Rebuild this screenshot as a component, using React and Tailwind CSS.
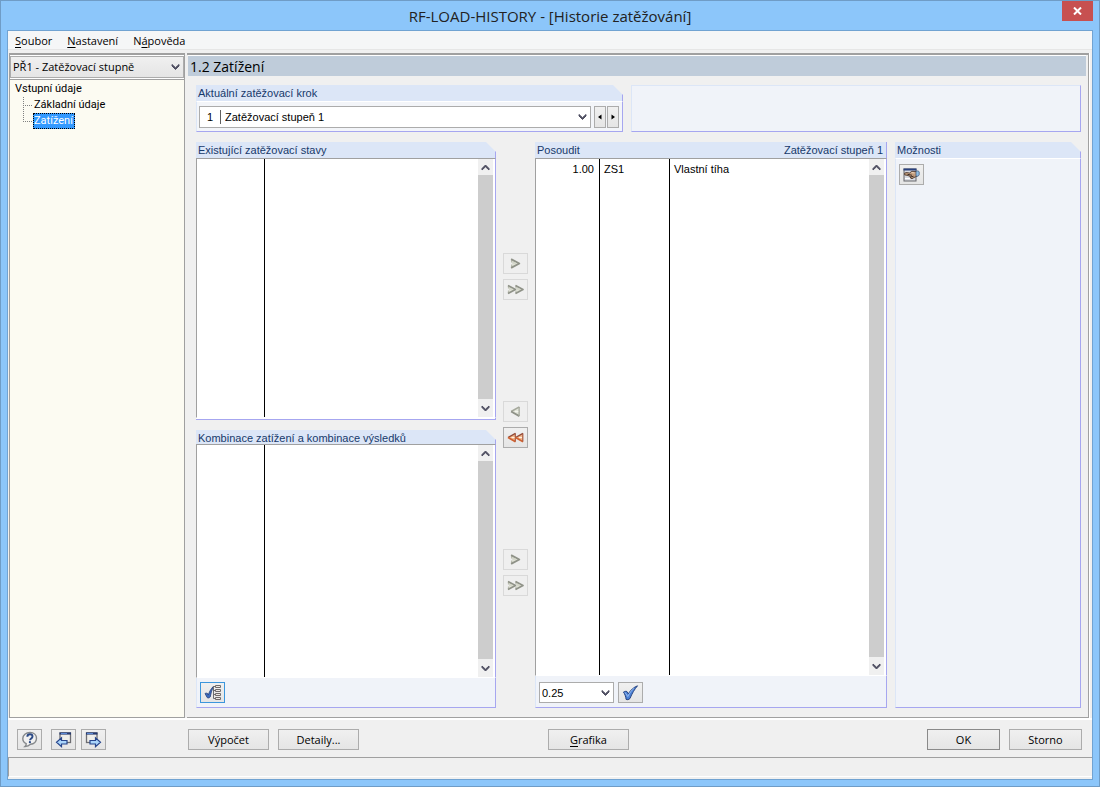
import { useState } from 'react';
import clsx from 'clsx';

const CHEVRON = 'pointer-events-none absolute top-1/2 -translate-y-1/2';

function ChevronDown({ className }) {
    return (
        <svg width="9" height="7" viewBox="0 0 9 7" className={className} aria-hidden="true">
            <path d="M1 1v1.5l3.5 3.5L8 2.5V1L4.5 4.2z" fill="#4d4d60" stroke="#4d4d60" strokeWidth="1" />
        </svg>
    );
}

function ChevronUp() {
    return (
        <svg width="9" height="7" viewBox="0 0 9 7" aria-hidden="true">
            <path d="M1 6V4.5L4.5 1 8 4.5V6L4.5 2.8z" fill="#4d4d60" stroke="#4d4d60" strokeWidth="1" />
        </svg>
    );
}

function ArrowHead({ x, left, active }) {
    if (!left) {
        return (
            <g transform={`translate(${x} 0)`}>
                <path d="M1 1L9 5L1 9L2.5 5z" fill="#e0e2d6" />
                <path d="M1.500 1V4M1.500 6V9" stroke="#b9bcae" strokeWidth="1.200" />
                <path d="M1 1L8.500 5L1 9" stroke="#8f9288" strokeWidth="1.600" strokeLinejoin="round" />
                <path d="M2 4.500h3.500" stroke="#c9ccbe" />
            </g>
        );
    }
    return (
        <g transform={`translate(${x} 0)`}>
            <path d="M8.500 .8L1 5l7.500 4.200z" fill={active ? '#f3b98c' : '#e2e5da'} />
            <path d="M8.500 .8L1 5" stroke={active ? '#8f4a38' : '#a5a89c'} strokeWidth="1.400" />
            <path d="M1 5l7.500 4.200" stroke={active ? '#d0602f' : '#8f9288'} strokeWidth="1.600" />
            <path d="M8.300 1v8" stroke={active ? '#a85a44' : '#a5a89c'} strokeWidth="1.200" />
            <path d="M4.500 5h3" stroke={active ? '#fff1e2' : '#f4f5ee'} />
        </g>
    );
}

function MoveButton({ label, left, double, active }) {
    return (
        <button
            type="button"
            aria-label={label}
            disabled={!active}
            className={clsx(
                'flex h-[21px] w-[25px] items-center justify-center border',
                active ? 'border-[#acacac] bg-linear-to-b from-[#f0f0f0] to-[#e5e5e5]' : 'border-[#d9d9d9] bg-[#efefef]'
            )}
        >
            <svg width={double ? 17 : 11} height="11" viewBox={double ? '0 0 17 10' : '0 0 10 10'} fill="none">
                <ArrowHead x={0} left={left} active={active} />
                {double && <ArrowHead x={7.5} left={left} active={active} />}
            </svg>
        </button>
    );
}

function Button({ children, className, ...props }) {
    return (
        <button
            type="button"
            className={clsx(
                'flex h-[21px] shrink-0 items-center justify-center border bg-linear-to-b from-[#f0f0f0] to-[#e5e5e5]',
                className
            )}
            {...props}
        >
            {children}
        </button>
    );
}

function ScrollBar() {
    return (
        <div className="mr-0.5 flex w-[15px] shrink-0 flex-col bg-[#cdcdcd]">
            <button type="button" aria-label="Nahoru" className="flex h-4 items-center justify-center bg-[#f0f0f0]">
                <ChevronUp />
            </button>
            <div className="flex-1" />
            <button type="button" aria-label="Dolů" className="flex h-[18px] items-center justify-center bg-[#f0f0f0]">
                <ChevronDown />
            </button>
        </div>
    );
}

function Group({ title, extra, cut = true, headClass = 'h-4', className, children }) {
    return (
        <section className={clsx('flex min-w-0 flex-col', className)}>
            <h2
                className={clsx(
                    'flex shrink-0 items-center justify-between border-r border-[#a6a6f0] bg-[#dce6f7] pr-[3px] pl-0.5 text-[#17396b]',
                    headClass,
                    cut && '[clip-path:polygon(0_0,calc(100%-10px)_0,100%_10px,100%_100%,0_100%)]'
                )}
            >
                <span>{title}</span>
                {extra && <span>{extra}</span>}
            </h2>
            {children}
        </section>
    );
}

function ListBox({ children, label }) {
    return (
        <div className="flex flex-1 border-t border-r border-b border-l border-t-[#a0a0a0] border-r-[#a6a6f0] border-b-white border-l-[#a0a0a0] bg-white">
            <table aria-label={label} className="flex-1 table-fixed border-separate border-spacing-0">
                {children}
            </table>
            <ScrollBar />
        </div>
    );
}

function EmptyList({ label }) {
    return (
        <ListBox label={label}>
            <tbody>
                <tr>
                    <td className="w-[68px] border-r border-black" />
                    <td />
                </tr>
            </tbody>
        </ListBox>
    );
}

function GroupFooter({ children }) {
    return (
        <div className="flex shrink-0 items-start gap-1 border-r border-b border-l border-r-[#a6a6f0] border-b-[#a6a6f0] border-l-[#dce6f7] bg-[#f0f3f9] px-[3px] py-1">
            {children}
        </div>
    );
}

function TreeLine({ last }) {
    return (
        <svg width="10" height="16" viewBox="0 0 10 16" aria-hidden="true" className="shrink-0">
            <path d={last ? 'M.5 0V9' : 'M.5 0V16'} stroke="#808080" strokeDasharray="1 1" />
            <path d="M0 8.5H10" stroke="#808080" strokeDasharray="1 1" />
        </svg>
    );
}

function HelpIcon() {
    return (
        <svg width="17" height="17" viewBox="0 0 17 17" fill="none">
            <path
                d="M9 1.500c4 0 6.500 2.500 6.500 5.800S13 13 9.500 13.200c-1.500 1.500-3 2.200-5.500 2.300.9-.8 1.300-1.600 1.200-2.800C3 11.700 1.800 9.800 1.800 7.500 1.800 4 5 1.500 9 1.500z"
                fill="#f1f1f1"
                stroke="#85888b"
                strokeWidth="1.400"
            />
            <path d="M6.300 5.800c.1-1.700 1.200-2.500 2.600-2.500 1.600 0 2.600.9 2.600 2.200 0 1.900-2.400 1.900-2.500 3.700" stroke="#2c4a86" strokeWidth="1.900" />
            <circle cx="8.900" cy="11.200" r="1.100" fill="#2c4a86" />
        </svg>
    );
}

function WindowArrowIcon({ next }) {
    return (
        <svg width="17" height="16" viewBox="0 0 17 16" fill="none">
            <rect x={next ? 1.5 : 5} y="1" width="10.500" height="9.500" fill="#efeeea" stroke="#6d6d72" strokeWidth="1.300" />
            <path d={next ? 'M1 1.500h11.500' : 'M4.500 1.500H16'} stroke="#26396f" strokeWidth="2.200" />
            <path d={next ? 'M2 1.500h6' : 'M6 1.500h6'} stroke="#5b8ad8" />
            <path
                d={next ? 'M5 8.500h5.500V5.800l5 4.400-5 4.400v-2.600H5z' : 'M12 8.500H6.500V5.800l-5 4.400 5 4.400v-2.600H12z'}
                fill="#a9d4fb"
                stroke="#27458c"
                strokeWidth="1.200"
            />
        </svg>
    );
}

function CheckIcon() {
    return (
        <svg width="17" height="16" viewBox="0 0 17 16">
            <path
                d="M1.500 7c1.200-.7 2.500-.9 3.500-.4l1.300 2.200C8.500 5.300 11.500 2.300 15.500.8 12.500 4.300 10 8.500 8 13.500c-1.300 1.200-2.700 1.500-3.900.9-.4-2.900-1.200-5.200-2.600-7.400z"
                fill="#4d82d6"
                stroke="#1d3a78"
                strokeWidth="0.900"
            />
            <path d="M3 7.500l2.800 4C7.500 8 9.500 5.300 12 3.300" fill="none" stroke="#9fc2f2" strokeWidth="0.900" />
        </svg>
    );
}

function CheckListIcon() {
    return (
        <svg width="18" height="17" viewBox="0 0 18 17" fill="none">
            <path
                d="M1 9.500c1.200-.5 1.900-.4 2.600 0l.6 1.600C5.500 7.500 7 4.700 9.300 2.500 7.800 6.300 6.800 9.500 6.200 13c-1 1-2 1.200-3 .6z"
                fill="#3d6cc0"
                stroke="#253f78"
                strokeWidth="0.800"
            />
            <path d="M9.500 2v12.500M9.500 2.500h2M9.500 6.500h2M9.500 10.500h2M9.500 14.500h2" stroke="#6d6d70" />
            <path d="M11.500 1.500h5v2h-5zM11.500 5.500h5v2h-5zM11.500 9.500h5v2h-5zM11.500 13.500h5v2h-5z" fill="#ece7e2" stroke="#706b6b" />
        </svg>
    );
}

function HandWindowIcon() {
    return (
        <svg width="17" height="14" viewBox="0 0 17 14" fill="none">
            <rect x="1" y="1" width="12" height="12" fill="#d9dbe2" stroke="#66666b" />
            <path d="M.5 1.500h13" stroke="#2a4280" strokeWidth="2" />
            <path d="M2 10.500h6" stroke="#fff" />
            <path
                d="M1.500 5.200c2-1 3.500-.6 5-.2l2.300-1.700L14 3.500v4.700l-3 1.300-2 1.200-1.700-.7.300-1.300-2.600-1.200-3.300-.6z"
                fill="#c39d7c"
                stroke="#4c3a30"
                strokeWidth="0.900"
            />
            <path d="M4.500 6.300l4.500 1M7.500 9l3-.7" stroke="#3d2e27" />
            <path d="M8.500 4.500l3 .5" stroke="#efd7bf" />
            <path d="M13 3.200c1.500-.6 3-.4 3.200 1v2.600c-.4 1.200-1.800 1.700-3.200 1.500z" fill="#8fbfe4" stroke="#3c4f70" strokeWidth="0.700" />
        </svg>
    );
}

const menu = [
    { before: '', key: 'S', after: 'oubor' },
    { before: '', key: 'N', after: 'astavení' },
    { before: 'N', key: 'á', after: 'pověda' },
];

const pages = ['Základní údaje', 'Zatížení'];

const assessed = [{ factor: '1.00', id: 'ZS1', name: 'Vlastní tíha' }];

export default function App() {
    const [page, setPage] = useState('Zatížení');

    return (
        <div className="flex min-h-screen flex-col border border-[#6f9cc6] bg-[#8cc6fa] font-['Liberation_Sans',Arial,sans-serif] text-[11px] leading-4 text-black">
            {/* Title bar */}
            <header className="flex h-[29px] shrink-0 items-start">
                <div className="w-[37px]" />
                <h1 className="flex-1 pt-1 text-center font-['Open_Sans',sans-serif] text-[15px] leading-[22px] text-[#222]">
                    RF-LOAD-HISTORY - [Historie zatěžování]
                </h1>
                <button type="button" aria-label="Zavřít" className="mr-1.5 flex h-5 w-[31px] items-center justify-center bg-[#c75050]">
                    <svg width="9" height="8" viewBox="0 0 9 8">
                        <path d="M1 .5L8 7.500M8 .5L1 7.500" stroke="#fff" strokeWidth="2" />
                    </svg>
                </button>
            </header>

            <div className="mx-1.5 mb-1.5 flex flex-1 flex-col border border-[#71a3d2] bg-[#f0f0f0]">
                <nav className="mb-[3px] flex h-[19px] shrink-0 items-end gap-[15px] border-b border-[#e6e6e6] bg-[#f5f6f7] pl-[7px] font-['Open_Sans',sans-serif] text-[11px]">
                    {menu.map((item) => (
                        <button key={item.after} type="button">
                            {item.before}
                            <span className="underline underline-offset-2">{item.key}</span>
                            {item.after}
                        </button>
                    ))}
                </nav>

                <div className="flex flex-1 gap-0.5 border-b-2 border-white">
                    {/* Navigator */}
                    <aside className="ml-px flex w-[176px] shrink-0 flex-col border-x border-t-2 border-b border-[#a0a0a0] bg-white pt-px text-[11px]">
                        <div className="relative mb-px h-[22px] border border-[#acacac] bg-linear-to-b from-[#f0f0f0] to-[#e5e5e5]">
                            <select
                                aria-label="Případ"
                                className="h-full w-full appearance-none bg-transparent pl-0.5 font-['Open_Sans',sans-serif] outline-none"
                            >
                                <option>PŘ1 - Zatěžovací stupně</option>
                            </select>
                            <ChevronDown className={clsx(CHEVRON, 'right-[3px]')} />
                        </div>
                        <div className="flex-1 border-t border-[#a0a0a0] bg-[#fcfbf2] pt-px pl-1 font-[Roboto,sans-serif]">
                            <div className="h-4 pl-px">Vstupní údaje</div>
                            <ul className="pl-[9px]">
                                {pages.map((p, i) => (
                                    <li key={p} className="flex h-4 items-center">
                                        <TreeLine last={i === pages.length - 1} />
                                        <button
                                            type="button"
                                            onClick={() => setPage(p)}
                                            className={clsx(
                                                'h-4 border border-dotted pr-px leading-3',
                                                p === page ? 'border-black bg-[#3399ff] text-white' : 'border-transparent'
                                            )}
                                        >
                                            {p}
                                        </button>
                                    </li>
                                ))}
                            </ul>
                        </div>
                    </aside>

                    {/* Page 1.2 */}
                    <main className="mr-[3px] flex min-w-0 flex-1 flex-col border-t-2 border-r border-b border-[#a0a0a0] shadow-[1px_0_0_#ffffff]">
                        <div className="mr-0.5 ml-px h-[21px] shrink-0 border-t border-white bg-[#bfccda] pl-0.5 font-['Open_Sans',sans-serif] text-[14px] leading-[22px]">
                            1.2 Zatížení
                        </div>

                        <div className="flex flex-1 flex-col gap-2.5 py-[9px] pr-[7px] pl-[9px]">
                            <div className="grid shrink-0 grid-cols-[427fr_450fr] gap-2">
                                <Group title="Aktuální zatěžovací krok">
                                    <div className="flex flex-1 gap-[3px] border-t border-r border-b border-l border-t-white border-r-[#a6a6f0] border-b-[#a6a6f0] border-l-[#dce6f7] bg-[#f3f5f9] pt-1 pr-[3px] pb-[3px] pl-0.5">
                                        <div className="relative flex h-[22px] flex-1 items-center border border-[#acacac] bg-white">
                                            <span className="w-5 text-center">1</span>
                                            <span className="h-3.5 w-px bg-[#606060]" />
                                            <select aria-label="Aktuální zatěžovací krok" className="h-full flex-1 appearance-none pl-1 outline-none">
                                                <option>Zatěžovací stupeň 1</option>
                                            </select>
                                            <ChevronDown className={clsx(CHEVRON, 'right-[3px]')} />
                                        </div>
                                        <div className="flex gap-px">
                                            <Button aria-label="Předchozí" className="h-[22px] w-3 border-[#acacac]">
                                                <svg width="4" height="6" viewBox="0 0 4 6">
                                                    <path d="M3.500 .5v5L0 3z" />
                                                </svg>
                                            </Button>
                                            <Button aria-label="Další" className="h-[22px] w-3 border-[#acacac]">
                                                <svg width="4" height="6" viewBox="0 0 4 6">
                                                    <path d="M.5 .5v5L4 3z" />
                                                </svg>
                                            </Button>
                                        </div>
                                    </div>
                                </Group>
                                <div className="border border-t-[#dce6f7] border-r-[#a6a6f0] border-b-[#a6a6f0] border-l-[#dce6f7] bg-[#f0f3f9]" />
                            </div>

                            <div className="grid flex-1 grid-cols-[300fr_39px_352fr_194px]">
                                <div className="flex flex-col gap-2.5">
                                    <Group title="Existující zatěžovací stavy" className="flex-1">
                                        <EmptyList label="Existující zatěžovací stavy" />
                                        <div className="h-0.5 shrink-0 border-r border-b border-[#a6a6f0] bg-white" />
                                    </Group>
                                    <Group title="Kombinace zatížení a kombinace výsledků" headClass="h-3.5 pt-0.5" className="flex-1">
                                        <EmptyList label="Kombinace zatížení a kombinace výsledků" />
                                        <GroupFooter>
                                            <Button aria-label="Vybrat ze seznamu" className="w-[25px] border-[#3c96dc] from-[#dcf0fb] to-[#bfe2f5]">
                                                <CheckListIcon />
                                            </Button>
                                        </GroupFooter>
                                    </Group>
                                </div>

                                <div className="flex flex-col items-center justify-center gap-[101px] pb-0.5">
                                    <div className="flex flex-col gap-[5px]">
                                        <MoveButton label="Přidat zatěžovací stav" />
                                        <MoveButton label="Přidat všechny zatěžovací stavy" double />
                                    </div>
                                    <div className="flex flex-col gap-[5px]">
                                        <MoveButton label="Odebrat" left />
                                        <MoveButton label="Odebrat vše" left double active />
                                    </div>
                                    <div className="flex flex-col gap-[5px]">
                                        <MoveButton label="Přidat kombinaci" />
                                        <MoveButton label="Přidat všechny kombinace" double />
                                    </div>
                                </div>

                                <Group title="Posoudit" extra="Zatěžovací stupeň 1" cut={false}>
                                    <ListBox label="Posoudit">
                                        <tbody>
                                            {assessed.map((row) => (
                                                <tr key={row.id} className="align-top">
                                                    <td className="w-16 border-r border-black pt-0.5 pr-[5px] text-right">{row.factor}</td>
                                                    <td className="w-[70px] border-r border-black pt-0.5 pl-1">{row.id}</td>
                                                    <td className="pt-0.5 pl-1">{row.name}</td>
                                                </tr>
                                            ))}
                                        </tbody>
                                    </ListBox>
                                    <GroupFooter>
                                        <div className="relative mt-0.5 h-[21px] w-[75px] border border-[#acacac] bg-white">
                                            <select aria-label="Součinitel" className="h-full w-full appearance-none pl-0.5 outline-none">
                                                <option>0.25</option>
                                            </select>
                                            <ChevronDown className={clsx(CHEVRON, 'right-[3px]')} />
                                        </div>
                                        <Button aria-label="Použít součinitel" className="mt-0.5 w-[25px] border-[#acacac]">
                                            <CheckIcon />
                                        </Button>
                                    </GroupFooter>
                                </Group>

                                <Group title="Možnosti" className="ml-2">
                                    <div className="flex-1 border border-t-white border-r-[#a6a6f0] border-b-[#a6a6f0] border-l-[#dce6f7] bg-[#f0f3f9] px-[3px] py-[5px]">
                                        <Button aria-label="Upravit" className="w-[25px] border-[#acacac]">
                                            <HandWindowIcon />
                                        </Button>
                                    </div>
                                </Group>
                            </div>
                        </div>
                    </main>
                </div>

                {/* Buttons */}
                <footer className="flex shrink-0 items-center pt-[9px] pr-2.5 pb-[7px] pl-[9px] font-['Open_Sans',sans-serif] text-[11px]">
                    <Button aria-label="Nápověda" className="w-[25px] border-[#acacac]">
                        <HelpIcon />
                    </Button>
                    <div className="ml-[9px] flex gap-[5px]">
                        <Button aria-label="Předchozí stránka" className="w-[25px] border-[#acacac]">
                            <WindowArrowIcon />
                        </Button>
                        <Button aria-label="Další stránka" className="w-[25px] border-[#acacac]">
                            <WindowArrowIcon next />
                        </Button>
                    </div>
                    <div className="ml-[82px] flex gap-[9px]">
                        <Button className="w-[81px] border-[#acacac]">Výpočet</Button>
                        <Button className="w-[81px] border-[#acacac]">Detaily...</Button>
                    </div>
                    <Button className="ml-[189px] w-[81px] border-[#acacac]">
                        <span className="underline underline-offset-2">G</span>rafika
                    </Button>
                    <div className="ml-auto flex gap-[9px]">
                        <Button className="w-[73px] border-[#8a8a8a]">OK</Button>
                        <Button className="w-[73px] border-[#acacac]">Storno</Button>
                    </div>
                </footer>
                <div className="mb-0.5 h-5 shrink-0 border-t border-b border-l border-t-[#a0a0a0] border-b-white border-l-[#a0a0a0]" />
            </div>
        </div>
    );
}
